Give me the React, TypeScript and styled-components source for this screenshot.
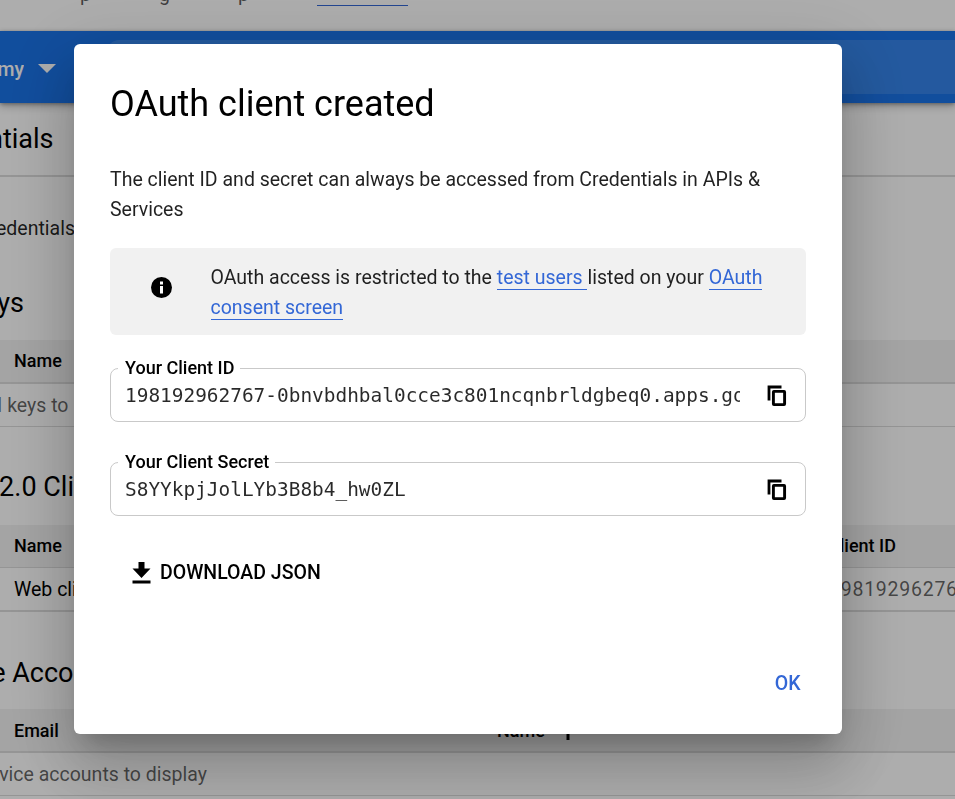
import React from 'react';
import styled, { createGlobalStyle } from 'styled-components';

const GlobalStyle = createGlobalStyle`
  * { box-sizing: border-box; }
  html, body { margin: 0; height: 100%; overflow: hidden; }
  body { background: #fff; color: #000; font: 400 19.5px/30px Roboto, sans-serif; }
`;

const Page = styled.div`
  height: 799px;
  width: 955px;
  display: flex;
  flex-direction: column;
  overflow: hidden;
`;

const Banner = styled.div`
  height: 31px;
  flex: none;
  display: flex;
  align-items: flex-start;
  overflow: hidden;
  padding-left: 80px;
  color: rgba(0, 0, 0, 0.65);
`;

const BannerText = styled.span`
  margin-top: -20px;
  width: 79px;
  flex: none;
`;

const BannerLink = styled.a`
  margin-top: -20px;
  width: 91px;
  height: 26px;
  border-bottom: 1px solid #3367d6;
`;

const AppBar = styled.header`
  height: 72px;
  flex: none;
  display: flex;
  align-items: center;
  background: #1a73e8;
  color: #fff;
  position: relative;
  box-shadow: 0 1px 4px rgba(0, 0, 0, 0.35), 0 4px 8px rgba(0, 0, 0, 0.2);
`;

const Project = styled.div`
  width: 57px;
  display: flex;
  align-items: center;
  font-weight: 500;
  padding-top: 6px;
`;

const ClipEnd = styled.span<{ $w: number }>`
  display: flex;
  justify-content: flex-end;
  width: ${(p) => p.$w}px;
  flex: none;
  overflow: hidden;
  white-space: nowrap;
`;

const Caret = styled.svg`
  flex: none;
  margin-left: 14px;
  margin-top: -3px;
`;

const Search = styled.div`
  flex: 1;
  height: 54px;
  margin-left: 50px;
  border-radius: 12px 0 0 12px;
  background: rgba(255, 255, 255, 0.12);
`;

const TitleBar = styled.div`
  height: 74px;
  flex: none;
  border-bottom: 2px solid #dcdcdc;
  font-size: 27px;
  line-height: 73px;
`;

const Intro = styled.div`
  height: 90px;
  flex: none;
  padding-top: 37px;
  color: rgba(0, 0, 0, 0.87);
`;

const Section = styled.section<{ $h: number }>`
  height: ${(p) => p.$h}px;
  flex: none;
`;

const Heading = styled.h2<{ $h: number; $gap?: number }>`
  height: ${(p) => p.$h}px;
  margin: 0;
  padding-bottom: ${(p) => p.$gap ?? 20}px;
  display: flex;
  align-items: flex-end;
  font-size: 27px;
  line-height: 34px;
  font-weight: 400;
`;

const HeadRow = styled.div<{ $line: number; $text?: number }>`
  height: ${(p) => 42 + p.$line}px;
  display: flex;
  background: #f2f2f2;
  border-bottom: ${(p) => p.$line}px solid #dcdcdc;
  font-size: 18px;
  font-weight: 500;
  line-height: ${(p) => p.$text ?? 42}px;
`;

const DataRow = styled.div<{ $line: number }>`
  height: ${(p) => 42 + p.$line}px;
  display: flex;
  border-bottom: ${(p) => p.$line}px solid #dcdcdc;
  line-height: 43px;
`;

const Cell = styled.div<{ $w: number; $pad?: number; $muted?: boolean; $mono?: boolean }>`
  width: ${(p) => p.$w}px;
  flex: none;
  display: flex;
  padding-left: ${(p) => p.$pad ?? 0}px;
  white-space: nowrap;
  overflow: hidden;
  color: ${(p) => (p.$muted ? 'rgba(0,0,0,0.62)' : 'inherit')};
  letter-spacing: ${(p) => (p.$mono ? '0.75px' : 'normal')};
`;

const SortArrow = styled.svg`
  margin: 12px 0 0 14px;
`;

const Scrim = styled.div`
  position: fixed;
  inset: 0;
  display: flex;
  align-items: flex-start;
  padding: 44px 0 0 74px;
  background: rgba(0, 0, 0, 0.32);
`;

const Dialog = styled.div`
  width: 768px;
  height: 690px;
  padding: 36px;
  display: flex;
  flex-direction: column;
  background: #fff;
  border-radius: 6px;
  box-shadow: 0 16.5px 22.5px -10.5px rgba(0, 0, 0, 0.2),
    0 36px 57px 4.5px rgba(0, 0, 0, 0.14), 0 13.5px 69px 12px rgba(0, 0, 0, 0.12);
`;

const Title = styled.h1`
  margin: 0 0 37px;
  font-size: 36px;
  line-height: 48px;
  font-weight: 400;
`;

const Text = styled.p`
  margin: 0;
  color: rgba(0, 0, 0, 0.87);
`;

const Notice = styled.div`
  height: 87px;
  flex: none;
  margin: 23px 0 22px;
  padding: 15px 36px 0 38px;
  display: flex;
  gap: 35.5px;
  background: #f1f1f1;
  border-radius: 6px;
`;

const InfoIcon = styled.svg`
  flex: none;
  margin-top: 11px;
`;

const Link = styled.a`
  color: #3367d6;
  border-bottom: 1px solid #3367d6;
`;

const Field = styled.fieldset`
  height: 65px;
  flex: none;
  margin: 0 0 29px;
  padding: 0 18px 0 14px;
  border: 1px solid #c9c9c9;
  border-radius: 8px;
  min-width: 0;
`;

const Legend = styled.legend`
  margin-left: -7px;
  padding: 0 6px 0 7px;
  font-size: 18px;
  line-height: 22px;
  font-weight: 500;
`;

const FieldBody = styled.div`
  display: flex;
  align-items: center;
  justify-content: space-between;
  height: 34px;
`;

const Value = styled.span`
  width: 615px;
  overflow: hidden;
  white-space: nowrap;
  font-family: 'DejaVu Sans Mono', monospace;
  font-size: 19.43px;
  color: rgba(0, 0, 0, 0.84);
`;

const Download = styled.button`
  display: flex;
  align-items: center;
  align-self: flex-start;
  gap: 9px;
  margin: 13px 0 0 22px;
  padding: 0;
  border: 0;
  background: none;
  font: 500 19.5px/30px Roboto, sans-serif;
  color: #000;
  svg { margin-top: -1px; }
`;

const Actions = styled.div`
  margin-top: auto;
  margin-bottom: -1px;
  display: flex;
  justify-content: flex-end;
`;

const OkButton = styled.button`
  padding: 0 5.5px 0 0;
  border: 0;
  background: none;
  font: 500 19.5px/30px Roboto, sans-serif;
  color: #3367d6;
`;

const CopyIcon = () => (
  <svg width="20" height="22" viewBox="0 0 20 22">
    <path d="M2 15.5V2H14.5" fill="none" stroke="#000" strokeWidth="2.8" />
    <rect x="6.4" y="6.4" width="11.2" height="13.2" fill="none" stroke="#000" strokeWidth="2.9" rx="0.5" />
  </svg>
);

const OutlinedField = ({ label, value }: { label: string; value: string }) => (
  <Field>
    <Legend>{label}</Legend>
    <FieldBody>
      <Value>{value}</Value>
      <CopyIcon />
    </FieldBody>
  </Field>
);

export default function App() {
  return (
    <>
      <GlobalStyle />
      <Page>
        <Banner>
          <BannerText>p</BannerText>
          <BannerText>g</BannerText>
          <BannerText>p</BannerText>
          <BannerLink />
        </Banner>
        <AppBar>
          <Project>
            <ClipEnd $w={24}>Academy</ClipEnd>
            <Caret width="18" height="9" viewBox="0 0 18 9">
              <path d="M0 0h18L9 9z" fill="#fff" />
            </Caret>
          </Project>
          <Search />
        </AppBar>
        <TitleBar>
          <ClipEnd $w={53.5}>Credentials</ClipEnd>
        </TitleBar>
        <Intro>
          <ClipEnd $w={75}>Create credentials</ClipEnd>
        </Intro>
        <Section $h={160}>
          <Heading $h={73}>
            <ClipEnd $w={24}>API Keys</ClipEnd>
          </Heading>
          <HeadRow $line={2}>
            <Cell $w={200} $pad={14}>Name</Cell>
          </HeadRow>
          <DataRow $line={1}>
            <Cell $w={200} $muted>
              <ClipEnd $w={68.5}>No API keys to</ClipEnd>
            </Cell>
          </DataRow>
        </Section>
        <Section $h={185}>
          <Heading $h={98} $gap={21}>
            <ClipEnd $w={74}>OAuth 2.0 Cli</ClipEnd>
          </Heading>
          <HeadRow $line={1} $text={41}>
            <Cell $w={828} $pad={14}>Name</Cell>
            <Cell $w={127}>Client ID</Cell>
          </HeadRow>
          <DataRow $line={2}>
            <Cell $w={829} $pad={14}>Web client 1</Cell>
            <Cell $w={126} $muted $mono>198192962767</Cell>
          </DataRow>
        </Section>
        <Section $h={187}>
          <Heading $h={97} $gap={19}>
            <ClipEnd $w={73.5}>Service Acco</ClipEnd>
          </Heading>
          <HeadRow $line={2} $text={44}>
            <Cell $w={497} $pad={14}>Email</Cell>
            <Cell $w={200}>
              Name
              <SortArrow width="18" height="19" viewBox="0 0 18 19">
                <path d="M7.5 19V5L2 10.5 0 8.5 9 0l9 8.5-2 2L10.5 5v14z" fill="#000" />
              </SortArrow>
            </Cell>
          </HeadRow>
          <DataRow $line={1}>
            <Cell $w={300} $muted>
              <ClipEnd $w={207}>No service accounts to display</ClipEnd>
            </Cell>
          </DataRow>
        </Section>
      </Page>
      <Scrim>
        <Dialog role="dialog">
          <Title>OAuth client created</Title>
          <Text>The client ID and secret can always be accessed from Credentials in APIs &amp; Services</Text>
          <Notice>
            <InfoIcon width="27" height="27" viewBox="0 0 27 27">
              <circle cx="13.5" cy="13.5" r="10.5" fill="#000" />
              <path d="M12 7.5h3v3h-3zM12 12h3v7.5h-3z" fill="#fff" />
            </InfoIcon>
            <Text>
              OAuth access is restricted to the <Link>{'test users '}</Link>listed on your <Link>OAuth consent screen</Link>
            </Text>
          </Notice>
          <OutlinedField label="Your Client ID" value="198192962767-0bnvbdhbal0cce3c801ncqnbrldgbeq0.apps.googleusercontent.com" />
          <OutlinedField label="Your Client Secret" value="S8YYkpjJolLYb3B8b4_hw0ZL" />
          <Download>
            <svg width="19" height="22" viewBox="0 0 19 22">
              <path d="M6.5 0h6v6.5h6L9.5 16 .5 6.5h6zM.5 18.5h18v3H.5z" fill="#000" />
            </svg>
            DOWNLOAD JSON
          </Download>
          <Actions>
            <OkButton>OK</OkButton>
          </Actions>
        </Dialog>
      </Scrim>
    </>
  );
}
